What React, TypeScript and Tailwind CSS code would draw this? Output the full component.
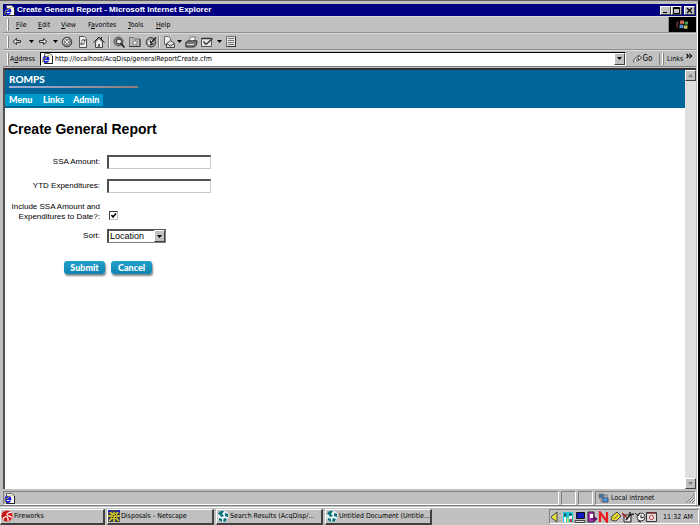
import React from "react";

type Kids = { children?: React.ReactNode };

const raised = "border border-t-white border-l-white border-r-[#404040] border-b-[#404040] bg-[#c0c0c0]";
const etched = "border border-t-[#808080] border-l-[#808080] border-r-white border-b-white";

function Svg({ w, h, children }: Kids & { w: number; h: number }) {
  return (
    <svg width={w} height={h} viewBox={`0 0 ${w} ${h}`} className="shrink-0" aria-hidden="true" fill="none">
      {children}
    </svg>
  );
}

function IEPage() {
  return (
    <Svg w={11} h={11}>
      <path d="M2.500.5h5l3 2.500v7.500h-8z" fill="#fff" stroke="#606060" />
      <path d="M10.500 3v7.500h-8" stroke="#202020" />
      <path d="M1 6.200h5.500c0-3.500-5-3.500-5 .3s4 2.500 5 1.200" stroke="#1818d8" strokeWidth="1.800" />
      <path d="M.5 9.500C1 6 4 3 7.500 2.500" stroke="#a8a020" />
    </Svg>
  );
}

function Caret() {
  return (
    <Svg w={5} h={3}>
      <path d="M0 0h5L2.500 3z" fill="#000" />
    </Svg>
  );
}

function Back() {
  return (
    <Svg w={10} h={9}>
      <path d="M1 4.500 4.500 1.500v2h4v2h-4v2z" stroke="#222" strokeWidth=".9" fill="#d8d8d8" />
    </Svg>
  );
}

function Forward() {
  return (
    <Svg w={10} h={9}>
      <path d="M9 4.500 5.500 1.500v2h-4v2h4v2z" stroke="#222" strokeWidth=".9" fill="#d8d8d8" />
    </Svg>
  );
}

function Stop() {
  return (
    <Svg w={12} h={12}>
      <circle cx="6" cy="6" r="4.800" fill="#8a8a8a" stroke="#3c3c3c" />
      <path d="M2.500 7.500C2 4 4 2.200 7 2.500" stroke="#ddd" />
      <path d="m4 4 4 4m0-4L4 8" stroke="#eee" />
    </Svg>
  );
}

function Refresh() {
  return (
    <Svg w={10} h={12}>
      <path d="M1.500.5h5l2 2v9h-7z" fill="#eee" stroke="#555" />
      <path d="M3.500 5.500c0-2 3-2.500 3.500-.5M6.500 6.500c0 2-3 2.500-3.500.5M7 3v2H5.500M3 9V7h1.500" stroke="#333" strokeWidth=".9" />
    </Svg>
  );
}

function Home() {
  return (
    <Svg w={12} h={12}>
      <path d="M2.500 6v5.500h7V6L6 2.500z" fill="#eee" stroke="#444" />
      <path d="M.5 6.500 6 1l5.500 5.500M8.500 3V1" stroke="#222" />
      <path d="M5 8h2v3.500H5z" fill="#666" />
    </Svg>
  );
}

function SearchGlobe() {
  return (
    <Svg w={12} h={12}>
      <circle cx="5.500" cy="5.500" r="4.500" fill="#8c8c8c" stroke="#555" />
      <circle cx="6" cy="5.500" r="2.500" fill="#eee" stroke="#222" />
      <path d="m8 7.500 3.500 4" stroke="#111" strokeWidth="1.500" />
    </Svg>
  );
}

function FavFolder() {
  return (
    <Svg w={12} h={11}>
      <path d="M.5 1.500h4l1 1.500h5.500v7.500H.5z" fill="#b8b8b8" stroke="#707070" />
      <path d="M11 3v7.500H.5" stroke="#333" />
      <path d="m6 4 .8 1.700H9L7.300 7.200 8 9.300 6 8 4 9.300l.7-2.100L3 5.700h2.200z" fill="#f4f4f4" stroke="#555" strokeWidth=".5" />
    </Svg>
  );
}

function History() {
  return (
    <Svg w={12} h={12}>
      <circle cx="6" cy="6.200" r="4.800" fill="#909090" stroke="#444" />
      <circle cx="5.500" cy="6.500" r="2.700" fill="#eee" />
      <path d="M5 4.500 6 7l5-5.500M8 7.500 5 9" stroke="#111" strokeWidth="1.200" />
    </Svg>
  );
}

function Mail() {
  return (
    <Svg w={12} h={12}>
      <path d="M1.500.5h4l2 2v6h-6z" fill="#eee" stroke="#666" />
      <path d="m3.500 7.500 4-3 4 3v4h-8z" fill="#ddd" stroke="#444" />
      <path d="m3.500 7.500 4 2.500 4-2.500" stroke="#444" />
    </Svg>
  );
}

function Printer() {
  return (
    <Svg w={13} h={12}>
      <path d="M4 5.500 5.500 1h5L9 5.500z" fill="#fff" stroke="#777" />
      <path d="M.7 6.500 3 4.800h9L11.500 9 9 11H1z" fill="#777" stroke="#333" />
      <path d="M2 8.500h7" stroke="#ddd" />
    </Svg>
  );
}

function EditPage() {
  return (
    <Svg w={12} h={11}>
      <path d="M.5 2.500h10v8H.5z" fill="#e8e8e8" stroke="#555" />
      <path d="M.5 2.500h10" stroke="#333" strokeWidth="1.500" />
      <path d="m5 8.500 6.500-6M2.500 5.500l2.500 3" stroke="#333" strokeWidth="1.200" />
    </Svg>
  );
}

function Discuss() {
  return (
    <Svg w={11} h={11}>
      <path d="M.5.500h9v10h-9z" fill="#e4e4e4" stroke="#777" />
      <path d="M9.500.500v10h-9" stroke="#333" />
      <path d="M2 2.500h6M2 4.500h6M2 6.500h6M2 8.500h6" stroke="#777" />
    </Svg>
  );
}

function Divider() {
  return <span className="h-3 w-[2px] shrink-0 border-r border-l border-r-[#e8e8e8] border-l-[#808080]" />;
}

function Grip() {
  return <span className="h-3 w-[2px] shrink-0 border-r border-l border-r-[#808080] border-l-white" />;
}

const tools: { label: string; cell: string; icon: React.ReactNode }[] = [
  { label: "Back", cell: "w-4", icon: <Back /> },
  { label: "Back list", cell: "w-3", icon: <Caret /> },
  { label: "Forward", cell: "w-3", icon: <Forward /> },
  { label: "Forward list", cell: "w-3", icon: <Caret /> },
  { label: "Stop", cell: "w-3", icon: <Stop /> },
  { label: "Refresh", cell: "w-5", icon: <Refresh /> },
  { label: "Home", cell: "w-3", icon: <Home /> },
  { label: "", cell: "w-2", icon: <Divider /> },
  { label: "Search", cell: "w-3", icon: <SearchGlobe /> },
  { label: "Favorites", cell: "w-5", icon: <FavFolder /> },
  { label: "History", cell: "w-3", icon: <History /> },
  { label: "", cell: "w-1", icon: <Divider /> },
  { label: "Mail", cell: "w-4", icon: <Mail /> },
  { label: "Mail list", cell: "w-1", icon: <Caret /> },
  { label: "Print", cell: "w-5", icon: <Printer /> },
  { label: "Edit", cell: "w-3", icon: <EditPage /> },
  { label: "Edit list", cell: "w-3", icon: <Caret /> },
  { label: "Discuss", cell: "w-3", icon: <Discuss /> },
];

function TitleBar() {
  const box = `flex h-[9px] items-center justify-center ${raised}`;
  return (
    <header className="flex h-3 shrink-0 items-center gap-[2px] bg-[#000080] px-px">
      <IEPage />
      <h1 className="flex-1 truncate font-['Liberation_Sans',Arial,sans-serif] text-[8px] leading-3 font-bold text-white">
        Create General Report - Microsoft Internet Explorer
      </h1>
      <div className="flex">
        <button aria-label="Minimize" className={`${box} w-[11px]`}>
          <Svg w={7} h={7}><path d="M1 5.500h4" stroke="#000" strokeWidth="1" /></Svg>
        </button>
        <button aria-label="Maximize" className={`${box} w-[11px]`}>
          <Svg w={7} h={7}><path d="M.5.500h6v6h-6zM.5 1.500h6" stroke="#000" /></Svg>
        </button>
        <button aria-label="Close" className={`${box} ml-[2px] w-[11px]`}>
          <Svg w={7} h={7}><path d="m1 1 5 5m0-5L1 6" stroke="#000" strokeWidth="1.300" /></Svg>
        </button>
      </div>
    </header>
  );
}

const menus = [
  ["", "F", "ile", "w-[22px]"],
  ["", "E", "dit", "w-[23px]"],
  ["", "V", "iew", "w-[27px]"],
  ["F", "a", "vorites", "w-10"],
  ["", "T", "ools", "w-7"],
  ["", "H", "elp", "w-6"],
];

function MenuBar() {
  return (
    <div className="flex h-4 shrink-0 border-b border-[#909090]">
      <nav className="flex flex-1 items-center border-r border-[#909090] pl-1">
        <Grip />
        <div className="flex pl-[7px]">
          {menus.map(([pre, key, post, width]) => (
            <button key={key} className={`${width} text-left leading-3 whitespace-nowrap`}>
              {pre}<u>{key}</u>{post}
            </button>
          ))}
        </div>
      </nav>
      <div className="flex w-[27px] items-center justify-center bg-black">
        <Svg w={13} h={11}>
          <path d="M4 2c2-1.300 3-.5 4 0v3.200c-1-.6-2.500-.7-4 0z" fill="#c86a4a" />
          <path d="M8.500 2.200c1 .6 2 .6 3.500 0v3c-1.500.7-2.500.5-3.500 0z" fill="#4c9a50" />
          <path d="M3.500 6c1.500-.8 3-.6 4 0v3.500c-1.500-.8-2.500-.6-4 0z" fill="#5c8ad0" />
          <path d="M8 6.200c1 .6 2.500.6 3.500 0v3c-1 .8-2.500.8-3.500.2z" fill="#d0c050" />
          <path d="M.5 3h2M0 5h2.500M0 7h2M1 9h1" stroke="#a04848" />
        </Svg>
      </div>
    </div>
  );
}

function ToolBar() {
  return (
    <div className="flex h-[17px] shrink-0 items-center border-t border-b border-t-[#dcdcdc] border-b-[#909090] pl-1">
      <Grip />
      <div className="flex">
        {tools.map(({ label, cell, icon }, i) =>
          label ? (
            <button key={i} aria-label={label} className={`flex h-3 ${cell} items-center justify-center`}>{icon}</button>
          ) : (
            <span key={i} className={`flex h-3 ${cell} items-center justify-center`}>{icon}</span>
          )
        )}
      </div>
    </div>
  );
}

function AddressBar() {
  return (
    <div className="flex h-4 shrink-0 items-center border-t border-[#dcdcdc] pl-1">
      <Grip />
      <label htmlFor="address" className="w-[31px] shrink-0 pl-px leading-3">
        A<u>d</u>dress
      </label>
      <div className="flex h-[14px] flex-1 items-center border border-t-black border-r-white border-b-white border-l-black bg-white pl-px">
        <IEPage />
        <input
          id="address"
          className="h-3 min-w-0 flex-1 bg-transparent pl-[2px] leading-3 outline-none"
          defaultValue="http://localhost/AcqDisp/generalReportCreate.cfm"
        />
        <button aria-label="Show addresses" className={`flex h-3 w-[11px] items-center justify-center ${raised}`}>
          <Caret />
        </button>
      </div>
      <button className="flex w-[34px] items-center justify-center gap-px border-r border-[#808080] text-[8px] leading-3">
        <Svg w={9} h={10}>
          <path d="M1 8.500C0 5 2.500 3 5.500 3V1L8.500 4 5.500 6.500v-2C4 4.500 3 6 4 7.500" fill="#e4e4e4" stroke="#333" strokeWidth=".9" />
        </Svg>
        Go
      </button>
      <div className="flex w-9 items-center gap-[3px] pl-[2px]">
        <Grip />
        <span className="leading-3">Links</span>
        <Svg w={7} h={12}><path d="m.5 1 2 2-2 2M3.500 1l2 2-2 2" stroke="#000" strokeWidth="1.200" /></Svg>
      </div>
    </div>
  );
}

function ScrollButton({ label, up }: { label: string; up?: boolean }) {
  return (
    <button aria-label={label} className={`flex h-[11px] shrink-0 items-center justify-center ${raised}`}>
      <Svg w={5} h={3}><path d={up ? "M0 3h5L2.500 0z" : "M0 0h5L2.500 3z"} fill="#808080" /></Svg>
    </button>
  );
}

const field =
  "h-[14px] w-[104px] rounded-none border border-t-2 border-l-2 border-t-[#505050] border-r-[#c8c8c8] border-b-[#c8c8c8] border-l-[#505050] bg-white px-1 text-[9px] outline-none";

const action =
  "h-[13px] w-[41px] rounded-[3px] bg-linear-to-b from-[#22a0cc] to-[#0f83b0] font-[Lato,sans-serif] text-[9px] leading-3 font-black text-white shadow-[1px_2px_2px_#808890]";

function ReportForm() {
  return (
    <form className="pt-[13px]" onSubmit={(e) => e.preventDefault()}>
      <div className="grid grid-cols-[95px_1fr] items-center gap-x-[7px] font-['Liberation_Sans',Arial,sans-serif] text-[8px] leading-[10px]">
        <label htmlFor="ssa" className="text-right">SSA Amount:</label>
        <div className="flex h-6 items-center"><input id="ssa" className={field} /></div>
        <label htmlFor="ytd" className="text-right">YTD Expenditures:</label>
        <div className="flex h-6 items-center"><input id="ytd" className={field} /></div>
        <label htmlFor="include" className="justify-self-end text-right whitespace-nowrap">
          Include SSA Amount and<br />Expenditures to Date?:
        </label>
        <div className="flex h-7 items-end pb-[6px] pl-[2px]">
          <span className="grid">
            <input
              id="include"
              type="checkbox"
              defaultChecked
              className="peer col-start-1 row-start-1 size-[9px] appearance-none border border-t-[#404040] border-r-[#c0c0c0] border-b-[#c0c0c0] border-l-[#404040] bg-white"
            />
            <span className="pointer-events-none invisible col-start-1 row-start-1 peer-checked:visible">
              <Svg w={9} h={9}><path d="m2.500 4 1.500 2L7 2.500" stroke="#000" strokeWidth="1.500" /></Svg>
            </span>
          </span>
        </div>
        <label htmlFor="sort" className="text-right">Sort:</label>
        <div className="flex h-5 items-center">
          <div className="grid h-[14px] w-[59px]">
            <select
              id="sort"
              className="col-start-1 row-start-1 appearance-none rounded-none border border-t-2 border-l-2 border-t-[#505050] border-r-[#808080] border-b-[#808080] border-l-[#505050] bg-white pl-px text-[9px] leading-[11px] outline-none"
            >
              <option>Location</option>
            </select>
            <span className={`pointer-events-none col-start-1 row-start-1 my-px mr-px flex w-[11px] items-center justify-center self-stretch justify-self-end ${raised}`}>
              <Caret />
            </span>
          </div>
        </div>
      </div>
      <div className="flex gap-[6px] pt-[15px] pl-[59px]">
        <button type="submit" className={action}>Submit</button>
        <button type="button" className={action}>Cancel</button>
      </div>
    </form>
  );
}

function Page() {
  return (
    <div className="flex min-h-0 flex-1 border-t-2 border-l-2 border-t-[#303030] border-l-[#505050] bg-white">
      <div className="min-w-0 flex-1 overflow-hidden">
        <div className="flex h-[38px] flex-col bg-[#006699] font-[Lato,sans-serif] text-white">
          <div className="h-[18px] w-[133px] pt-[3px] pl-1">
            <p className="text-[10px] leading-[13px] font-black">ROMPS</p>
            <div className="h-[2px] bg-linear-to-r from-[#9ab0dc] to-[#907c78]" />
          </div>
          <nav className="mt-[6px] flex h-3 w-[98px] items-center bg-[#0099cc] pl-1 text-[9px] leading-3 font-black">
            <a href="#menu" className="w-[34px]">Menu</a>
            <a href="#links" className="w-[30px]">Links</a>
            <a href="#admin">Admin</a>
          </nav>
        </div>
        <main className="pt-[13px]">
          <h2 className="pl-[3px] font-['Liberation_Sans',Arial,sans-serif] text-[14px] leading-4 font-bold">
            Create General Report
          </h2>
          <ReportForm />
        </main>
      </div>
      <div className="flex w-[11px] flex-col justify-between bg-[#e0e0e0]">
        <ScrollButton label="Scroll up" up />
        <ScrollButton label="Scroll down" />
      </div>
    </div>
  );
}

function StatusBar() {
  return (
    <footer className="flex h-4 shrink-0 gap-[2px] pt-[2px]">
      <div className={`flex flex-1 items-center ${etched}`}><IEPage /></div>
      <div className={`w-[15px] ${etched}`} />
      <div className={`w-[15px] ${etched}`} />
      <div className={`flex w-[101px] items-center gap-[2px] pl-[2px] ${etched}`}>
        <Svg w={11} h={11}>
          <path d="M1 1h5v4H1z" fill="#3878a8" stroke="#777" />
          <path d="M5 5h5v4H5z" fill="#40a8e0" stroke="#447" />
          <path d="M3 6v3h2M7 2h2v2" stroke="#777" />
        </Svg>
        <span className="flex-1 leading-3">Local intranet</span>
        <Svg w={9} h={10}>
          <path d="M0 10 9 1M3 10l6-6M6 10l3-3" stroke="#707070" />
          <path d="M1 10 9 2M4 10l5-5M7 10l2-2" stroke="#fff" strokeWidth=".5" />
        </Svg>
      </div>
    </footer>
  );
}

function Fireworks() {
  return (
    <Svg w={12} h={12}>
      <circle cx="6" cy="6" r="5.500" fill="#e01818" />
      <path d="M5.500 5c1-2 3-3 5-2.500M6 6c2-.5 3.500 0 5 2M5.500 6.500c1.500 1 2 2.500 1.500 4.500M5 6.500C3.500 6.500 2.500 7.500 2 9.500" stroke="#fff" strokeWidth="1.200" />
      <path d="M2.500 2.500 5 3.500M1 6h2.500m.5 4.500L5 8.500" stroke="#801010" />
    </Svg>
  );
}

function Netscape() {
  return (
    <Svg w={12} h={12}>
      <path d="M0 0h12v12H0z" fill="#40405c" />
      <path d="m1 1 10 10M11 1 1 11M6 2v10M0 6h12" stroke="#d8d020" strokeWidth="1.500" />
      <path d="M0 1h3M9 1h3" stroke="#2020c0" strokeWidth="2" />
      <path d="M4 3h4v1h1v4H8v1H4V8H3V4h1z" fill="#c0b820" />
      <path d="M5 5h1v1H5zM7 4h1v1H7zM4 7h1v1H4zM7 7h1v1H7z" fill="#222" />
    </Svg>
  );
}

function Dreamweaver() {
  return (
    <Svg w={12} h={12}>
      <circle cx="6" cy="6" r="5.500" fill="#e4f4f4" />
      <path d="M1 4c1-3 4-4 6-3L5 4l2 2-3 1-1-2zM8 3l3 1v3L8 6zM2 8l3 1v3L2 10zM7 8l3 1-2 3-2-1z" fill="#087078" />
    </Svg>
  );
}

const tasks = [
  { title: "Fireworks", width: "w-[105px]", icon: <Fireworks /> },
  { title: "Disposals - Netscape", width: "w-[107px]", icon: <Netscape /> },
  { title: "Search Results (AcqDisp/...", width: "w-[107px]", icon: <Dreamweaver /> },
  { title: "Untitled Document (Untitle...", width: "w-[107px]", icon: <Dreamweaver /> },
];

function Tray() {
  return (
    <div className={`flex h-[15px] items-center ${etched}`}>
      <Svg w={12} h={12}>
        <path d="M1.500 5.500 7 1v10L1.500 7z" fill="#e8e040" stroke="#444" />
        <path d="m9 3 2-1M9 6h2M9 9l2 1" stroke="#999" />
      </Svg>
      <Svg w={12} h={12}>
        <path d="M1 1h10v10H1z" fill="#20c8d8" />
        <path d="M3 2v4M8 2v3M2 4h3M7 3.500h3" stroke="#205060" strokeWidth="1.200" />
        <path d="M2 6h2v5H2zM7 5h3v3H7z" fill="#fff" />
        <path d="M5 7h1.500v4H5z" fill="#e0e020" />
        <path d="M8 8h2v3H8z" fill="#c02828" />
      </Svg>
      <Svg w={12} h={12}>
        <path d="M2.500 1.500h8v6h-8z" fill="#1018c0" stroke="#111" />
        <path d="M1 9.500h10v2H1z" fill="#ddd" stroke="#222" strokeWidth=".8" />
      </Svg>
      <Svg w={12} h={12}>
        <path d="M2 1h6v10H2z" fill="#c030c0" stroke="#222" />
        <path d="M4 3h3v4H4z" fill="#fff" />
        <path d="M5 8h6" stroke="#601060" strokeWidth="1.300" />
        <path d="m8 5 3.500 3L8 11z" fill="#601060" />
      </Svg>
      <Svg w={12} h={12}>
        <path d="M2 11V1.500L9 10.500V1" stroke="#f01818" strokeWidth="2.200" />
      </Svg>
      <Svg w={12} h={12}>
        <path d="m1 9 1-4 5-4 4 4-5 5z" fill="#e8d828" stroke="#444" />
        <path d="m4 8 4-4" stroke="#666" />
      </Svg>
      <Svg w={12} h={12}>
        <path d="M2 4h7v7H2z" fill="#e4e4e4" stroke="#222" />
        <path d="m0 2 5 5" stroke="#b01818" strokeWidth="1.300" />
        <path d="m4 9 4-5 4-1M8 4V1" stroke="#222" strokeWidth="1.500" />
      </Svg>
      <Svg w={12} h={12}>
        <circle cx="7" cy="6" r="4" fill="#f0f0f0" stroke="#444" />
        <path d="m1 2 3 3 2-3M7 4v3l3-1M4 10l3 1" stroke="#222" />
      </Svg>
      <Svg w={12} h={12}>
        <path d="M.5 1.500h10v9H.5z" fill="#ddd" stroke="#333" />
        <path d="M1 2h9" stroke="#703030" strokeWidth="1.500" />
        <circle cx="5.500" cy="6.500" r="2" stroke="#c02020" fill="#fff" />
      </Svg>
      <time className="w-10 text-center leading-3 whitespace-nowrap">11:32 AM</time>
    </div>
  );
}

function TaskBar() {
  return (
    <div className="flex h-[18px] shrink-0 items-center justify-between border-t border-white bg-[#c0c0c0] pr-px">
      <div className="flex gap-[2px]">
        {tasks.map(({ title, width, icon }) => (
          <button
            key={title}
            className={`flex h-4 ${width} items-center gap-px border-t border-r-2 border-b-2 border-l border-t-white border-r-[#404040] border-b-[#404040] border-l-white leading-3 whitespace-nowrap`}
          >
            {icon}
            {title}
          </button>
        ))}
      </div>
      <Tray />
    </div>
  );
}

export default function App() {
  return (
    <div className="flex h-screen flex-col overflow-hidden bg-[#c0c0c0] font-['DejaVu_Sans_Condensed','Liberation_Sans',sans-serif] text-[7px] text-black">
      <div className="flex min-h-0 flex-1 flex-col border-t border-r-2 border-t-[#606060] border-r-black pt-[3px]">
        <div className="flex min-h-0 flex-1 flex-col border-r border-white pr-px pl-[3px]">
          <TitleBar />
          <div className="flex shrink-0 flex-col border-t border-[#dcdcdc]">
            <MenuBar />
            <ToolBar />
            <AddressBar />
          </div>
          <div className="h-[2px] shrink-0 border-t border-[#808080]" />
          <Page />
          <StatusBar />
        </div>
      </div>
      <div className="h-[2px] shrink-0 border-t border-[#808080]" />
      <TaskBar />
    </div>
  );
}
